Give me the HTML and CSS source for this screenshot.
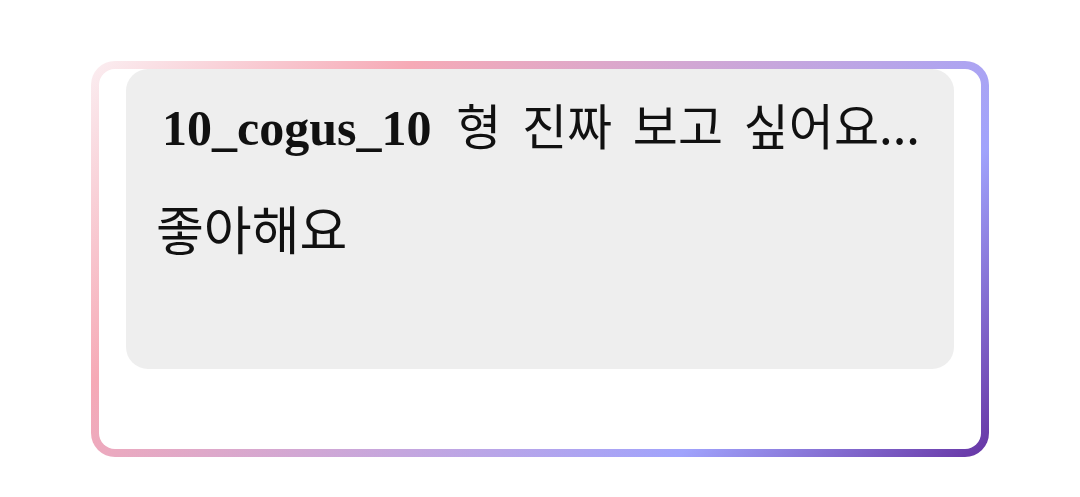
FILE: index.html
```html
<!DOCTYPE html>
<html lang="ko">
<head>
    <meta charset="UTF-8">
    <meta name="viewport" content="width=device-width, initial-scale=1.0">
    <title>댓글</title>
    <link rel="stylesheet" href="styles.css">
</head>
<body>
    <div class="card">
        <div class="card-inner">
            <div class="comment">
                <p class="comment-head"><span class="author">10_cogus_10</span> 형 진짜 보고 싶어요...</p>
                <p class="comment-body">좋아해요</p>
            </div>
        </div>
    </div>
</body>
</html>
```

FILE: styles.css
```css
body {
    margin: 0;
    padding: 0;
    background-color: #ffffff;
    font-family: 'Noto Sans CJK KR', 'Noto Sans', sans-serif;
    color: #111;
}

/* gradient frame: the card background shows through the padding */
.card {
    width: 898px;
    height: 396px;
    margin: 61px auto 0;
    padding: 8px;
    box-sizing: border-box;
    border-radius: 24px;
    background: linear-gradient(135deg, #fbeef1 0%, #f6aab6 25%, #a0a3fc 76%, #6634a4 100%);
}

.card-inner {
    height: 100%;
    padding: 0 27px;
    box-sizing: border-box;
    border-radius: 16px;
    background-color: #fff;
}

.comment {
    height: 300px;
    padding: 27px 30px 0;
    box-sizing: border-box;
    border-radius: 22px;
    background-color: #eeeeee;
}

.comment p {
    margin: 0;
    line-height: 56px;
    white-space: nowrap;
}

.comment-head {
    font-size: 49px;
    word-spacing: 7px;
    text-indent: 6px;
}

.author {
    font-family: 'Liberation Serif', serif;
    font-weight: bold;
    font-size: 50px;
    margin-right: 4px;
}

.comment-body {
    margin-top: 44px !important;
    font-size: 52px;
}
```
